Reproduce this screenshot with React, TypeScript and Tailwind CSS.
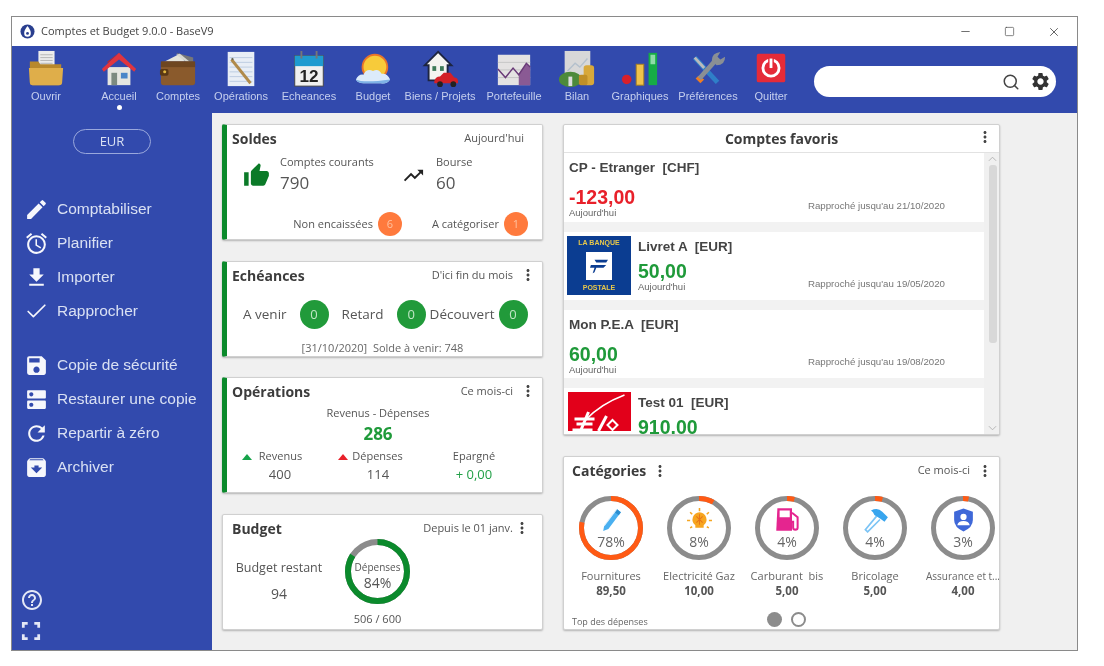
import type { ComponentType, ReactNode } from 'react';
import { Check, Minus, Search, Square, X } from 'lucide-react';
import {
    MdAccessAlarm,
    MdArchive,
    MdDns,
    MdEdit,
    MdFileDownload,
    MdHelpOutline,
    MdMoreVert,
    MdRefresh,
    MdSave,
    MdSettings,
    MdThumbUp,
    MdTrendingUp,
} from 'react-icons/md';

function Svg({ children, w = 40 }: { children: ReactNode; w?: number }) {
    return (
        <svg viewBox="0 0 40 40" width={w} height={w}>
            {children}
        </svg>
    );
}

const toolbar = [
    {
        label: 'Ouvrir', width: 'w-[68px]', icon: (
            <Svg>
                <rect x="12" y="1" width="17" height="20" fill="#ececec" />
                <path d="M14 5h13M14 8h13M14 11h13M14 14h13" stroke="#b4b4b4" />
                <path d="M3 12h9l2 3h22v19a3 3 0 0 1-3 3H6a3 3 0 0 1-3-3z" fill="#b8882c" />
                <path d="M2 19h36l-1 15a3 3 0 0 1-3 3H6a3 3 0 0 1-3-3z" fill="#dfae4a" />
            </Svg>
        ),
    },
    {
        label: 'Accueil', width: 'w-[78px]', active: true, icon: (
            <Svg>
                <rect x="8" y="18" width="24" height="19" fill="#e6e6e0" />
                <rect x="12" y="24" width="6" height="13" fill="#7d8a80" />
                <rect x="22" y="24" width="7" height="6" fill="#4a86c8" />
                <path d="M20 3L38 20l-2 3L20 10 4 23l-2-3z" fill="#e0353f" />
                <path d="M20 3L8 14v-2z" fill="#c22" />
            </Svg>
        ),
    },
    {
        label: 'Comptes', width: 'w-[40px]', icon: (
            <Svg>
                <path d="M6 12l16-8 5 8z" fill="#e4e4dc" />
                <path d="M18 3l10 9h8V8z" fill="#777" />
                <path d="M22 4l10 8h-4L18 5z" fill="#d8d8d0" />
                <rect x="2" y="12" width="36" height="25" rx="3" fill="#8a5a2c" />
                <rect x="2" y="12" width="36" height="6" fill="#6e4620" />
                <rect x="1" y="20" width="9" height="7" rx="2" fill="#5a3814" />
                <circle cx="6" cy="23" r="1.6" fill="#e2b840" />
            </Svg>
        ),
    },
    {
        label: 'Opérations', width: 'w-[86px]', icon: (
            <Svg>
                <rect x="6" y="2" width="28" height="36" fill="#e8eef6" />
                <path d="M8 8h24M8 13h24M8 18h24M8 23h24M8 28h24M8 33h24" stroke="#bccbe0" />
                <path d="M10 10l20 25" stroke="#b08a4a" strokeWidth="3" />
                <path d="M10 10l2-1" stroke="#665" strokeWidth="2" />
            </Svg>
        ),
    },
    {
        label: 'Echeances', width: 'w-[50px]', icon: (
            <Svg>
                <rect x="5" y="6" width="30" height="32" fill="#f0f0f0" stroke="#444" />
                <rect x="5" y="6" width="30" height="11" fill="#1f9bd0" />
                <path d="M12 1v8M28 1v8" stroke="#777" strokeWidth="2" />
                <text x="20" y="34" fontSize="18" fontWeight="700" textAnchor="middle" fontFamily="Liberation Sans" fill="#222">12</text>
            </Svg>
        ),
    },
    {
        label: 'Budget', width: 'w-[78px]', icon: (
            <Svg>
                <circle cx="22" cy="18" r="14" fill="#e8742a" />
                <circle cx="22" cy="18" r="12" fill="#f7cb3a" />
                <path d="M2 31q3-6 8-5 3-7 10-4 6-3 9 3 6-1 9 6-3 5-10 4H10q-6 0-8-4z" fill="#dcebfa" />
                <path d="M2 31q8 4 36 0-3 5-10 4H10q-6 0-8-4z" fill="#7eb2e6" />
            </Svg>
        ),
    },
    {
        label: 'Biens / Projets', width: 'w-[56px]', icon: (
            <Svg>
                <path d="M18 2L4 16h4v16h20V16h4z" fill="#f4f4f0" stroke="#1d2540" strokeWidth="2" />
                <rect x="12" y="17" width="4" height="5" fill="#3d7a58" />
                <rect x="20" y="17" width="4" height="5" fill="#3d7a58" />
                <path d="M14 33q1-5 6-5l4-4h7l4 5q4 0 4 4v2H14z" fill="#d32027" />
                <circle cx="20" cy="36" r="3" fill="#222" />
                <circle cx="34" cy="36" r="3" fill="#222" />
            </Svg>
        ),
    },
    {
        label: 'Portefeuille', width: 'w-[92px]', icon: (
            <Svg>
                <rect x="3" y="5" width="34" height="32" fill="#e4e2e2" />
                <path d="M3 13h34M3 21h34M3 29h34" stroke="#c4c4c4" />
                <path d="M3 20l8 9 8-10 6 7 8-12 4 4v19H25V26l-6-7-8 10z" fill="#8a5a94" />
                <path d="M3 20l8 9 8-10 6 7 8-12 4 4" fill="none" stroke="#6a3a78" strokeWidth="1.5" />
            </Svg>
        ),
    },
    {
        label: 'Bilan', width: 'w-[34px]', icon: (
            <Svg>
                <rect x="7" y="1" width="27" height="27" fill="#d8d8d8" />
                <path d="M10 22l8-8 5 4 8-9" stroke="#b4c0cc" fill="none" strokeWidth="1.5" />
                <ellipse cx="13" cy="31" rx="12" ry="8" fill="#4d8a3a" />
                <rect x="11" y="28" width="4" height="10" fill="#ddd" />
                <rect x="27" y="16" width="11" height="21" rx="3" fill="#d8a83a" />
                <rect x="22" y="26" width="9" height="11" rx="2" fill="#c08f28" />
            </Svg>
        ),
    },
    {
        label: 'Graphiques', width: 'w-[92px]', icon: (
            <Svg>
                <circle cx="6" cy="31" r="5" fill="#d8202a" />
                <rect x="16" y="15" width="8" height="22" fill="#f0c24a" stroke="#a8801e" />
                <rect x="29" y="3" width="9" height="34" fill="#16ac46" />
                <rect x="31" y="5" width="5" height="10" fill="#8edba8" />
            </Svg>
        ),
    },
    {
        label: 'Préférences', width: 'w-[44px]', icon: (
            <Svg>
                <path d="M6 8l24 26" stroke="#2f7fc8" strokeWidth="5" />
                <path d="M6 8l10 11" stroke="#bbb" strokeWidth="3" />
                <path d="M10 27l-3 3 5 5 4-4z" fill="#ee7d22" />
                <path d="M11 30L27 12" stroke="#8a8f94" strokeWidth="5" />
                <path d="M24 11q0-8 9-9l-3 5 3 3 5-3q0 9-9 9z" fill="#8a8f94" />
            </Svg>
        ),
    },
    {
        label: 'Quitter', width: 'w-[82px]', icon: (
            <Svg>
                <rect x="5" y="4" width="30" height="30" rx="2" fill="#e52b38" />
                <circle cx="20" cy="19" r="8.5" fill="none" stroke="#fff" strokeWidth="3" />
                <path d="M20 8v11" stroke="#e52b38" strokeWidth="6" />
                <path d="M20 9v10" stroke="#fff" strokeWidth="3" />
            </Svg>
        ),
    },
];

type SideIcon = ComponentType<{ size?: number; className?: string }>;

const ThinCheck: SideIcon = (props) => <Check {...props} strokeWidth={1.6} />;

const actionsTop: { label: string; icon: SideIcon }[] = [
    { label: 'Comptabiliser', icon: MdEdit },
    { label: 'Planifier', icon: MdAccessAlarm },
    { label: 'Importer', icon: MdFileDownload },
    { label: 'Rapprocher', icon: ThinCheck },
];

const actionsBottom: { label: string; icon: SideIcon }[] = [
    { label: 'Copie de sécurité', icon: MdSave },
    { label: 'Restaurer une copie', icon: MdDns },
    { label: 'Repartir à zéro', icon: MdRefresh },
    { label: 'Archiver', icon: MdArchive },
];

function SideAction({ label, icon: Icon }: { label: string; icon: SideIcon }) {
    return (
        <div className="flex h-[34px] items-center pl-[12px]">
            <Icon size={25} className="shrink-0 text-[#f6f7fc]" />
            <span className="ml-[8px] text-[15.5px] whitespace-nowrap text-[#d9e0f3]">{label}</span>
        </div>
    );
}

function Dots({ className }: { className?: string }) {
    return <MdMoreVert size={18} className={`shrink-0 text-[#444] ${className ?? ''}`} />;
}

function Card({ className, accent, children }: { className: string; accent?: boolean; children: ReactNode }) {
    return (
        <div
            className={`rounded-[2px] border border-[#d0d0d0] bg-white shadow-[0_1px_2px_rgba(0,0,0,0.25)] ${accent ? 'border-l-[5px] border-l-[#0b8a2c] pl-[5px]' : 'pl-[9px]'} ${className}`}
        >
            {children}
        </div>
    );
}

function CardHead({ title, right, dots = true, tight }: { title: string; right: string; dots?: boolean; tight?: boolean }) {
    return (
        <div className={`flex h-[28px] items-center pb-[2px] ${tight ? 'pr-[11px]' : 'pr-[5px]'}`}>
            <span className="text-[14px] font-bold text-[#3c3c3c]">{title}</span>
            <span className={`ml-auto text-[11px] text-[#555] ${dots ? '' : 'mr-[13px]'}`}>{right}</span>
            {dots && <Dots className={tight ? '' : 'ml-[6px]'} />}
        </div>
    );
}

function Ring({ pct, color, size, stroke, children }: { pct: number; color: string; size: number; stroke: number; children: ReactNode }) {
    const r = (size - stroke) / 2;
    const c = 2 * Math.PI * r;
    return (
        <div className="relative shrink-0" style={{ width: size, height: size }}>
            <svg width={size} height={size} className="-rotate-90">
                <circle cx={size / 2} cy={size / 2} r={r} fill="none" stroke="#8c8c8c" strokeWidth={stroke} />
                <circle cx={size / 2} cy={size / 2} r={r} fill="none" stroke={color} strokeWidth={stroke} strokeDasharray={`${(c * pct) / 100} ${c}`} />
            </svg>
            <div className="absolute inset-0 flex flex-col items-center">{children}</div>
        </div>
    );
}

function CountBadge({ value, color, size }: { value: string; color: string; size: string }) {
    return (
        <span className={`flex shrink-0 items-center justify-center rounded-full ${size} ${color}`}>{value}</span>
    );
}

function Triangle({ color, className }: { color: string; className: string }) {
    return (
        <svg viewBox="0 0 10 6" width="10" height="6" className={`inline-block ${className}`}>
            <path d="M5 0l5 6H0z" fill={color} />
        </svg>
    );
}

function Soldes() {
    return (
        <Card accent className="h-[116px]">
            <CardHead title="Soldes" right="Aujourd'hui" dots={false} />
            <div className="mt-[1px] flex h-[42px] items-center">
                <MdThumbUp size={27} className="ml-[11px] text-[#0b7a28]" />
                <div className="ml-[10px] w-[122px] text-[#555]">
                    <div className="text-[11px] leading-[16px]">Comptes courants</div>
                    <div className="text-[17px] leading-[26px]">790</div>
                </div>
                <MdTrendingUp size={23} className="text-[#222]" />
                <div className="ml-[11px] text-[#555]">
                    <div className="text-[11px] leading-[16px]">Bourse</div>
                    <div className="text-[17px] leading-[26px]">60</div>
                </div>
            </div>
            <div className="mt-[15px] flex h-[26px] items-center justify-end pr-[14px] text-[11px] text-[#555]">
                <span>Non encaissées</span>
                <CountBadge value="6" size="ml-[5px] h-[24px] w-[24px] text-[11px] text-[#ffc2a0]" color="bg-[#ff7a3d]" />
                <span className="ml-[30px]">A catégoriser</span>
                <CountBadge value="1" size="ml-[5px] h-[24px] w-[24px] text-[11px] text-[#ffc2a0]" color="bg-[#ff7a3d]" />
            </div>
        </Card>
    );
}

function Echeances() {
    const badge = 'h-[29px] w-[29px] text-[13px] text-[#bfe6c4]';
    return (
        <Card accent className="mt-[21px] h-[96px]">
            <CardHead title="Echéances" right="D'ici fin du mois" />
            <div className="mt-[10px] flex h-[29px] items-center pl-[11px] text-[13.5px] text-[#555]">
                <span>A venir</span>
                <CountBadge value="0" size={`ml-[13px] ${badge}`} color="bg-[#219a3a]" />
                <span className="ml-[13px]">Retard</span>
                <CountBadge value="0" size={`ml-[13px] ${badge}`} color="bg-[#219a3a]" />
                <span className="ml-[4px]">Découvert</span>
                <CountBadge value="0" size={`ml-[4px] ${badge}`} color="bg-[#219a3a]" />
            </div>
            <div className="mt-[11px] pr-[9px] text-center text-[11px] whitespace-pre text-[#666]">[31/10/2020]  Solde à venir: 748</div>
        </Card>
    );
}

function Operations() {
    return (
        <Card accent className="mt-[20px] h-[116px]">
            <CardHead title="Opérations" right="Ce mois-ci" />
            <div className="pr-[18px] text-center text-[11px] leading-[14px] text-[#555]">Revenus - Dépenses</div>
            <div className="pr-[18px] text-center text-[17px] leading-[28px] font-bold text-[#1f9a3a]">286</div>
            <div className="grid grid-cols-[96px_100px_92px] text-center text-[#555]">
                <div className="pr-[16px] text-[11px] leading-[16px]"><Triangle color="#16a34a" className="mr-[7px]" />Revenus</div>
                <div className="pr-[15px] text-[11px] leading-[16px]"><Triangle color="#e8202a" className="mr-[4px]" />Dépenses</div>
                <div className="text-[11px] leading-[16px]">Epargné</div>
                <div className="text-[13px] leading-[20px]">400</div>
                <div className="text-[13px] leading-[20px]">114</div>
                <div className="text-[13px] leading-[20px] text-[#22a047]">+ 0,00</div>
            </div>
        </Card>
    );
}

function Budget() {
    return (
        <Card className="mt-[21px] h-[116px]">
            <CardHead title="Budget" right="Depuis le 01 janv." tight />
            <div className="flex text-[#555]">
                <div className="mt-[16px] w-[94px] text-center">
                    <div className="text-[12.5px] leading-[18px] whitespace-nowrap">Budget restant</div>
                    <div className="mt-[7px] text-[14px] leading-[20px]">94</div>
                </div>
                <div className="mt-[-4px] ml-[19px] flex flex-col items-center">
                    <Ring pct={84} color="#0b8a2c" size={65} stroke={6}>
                        <span className="mt-[21px] text-[10px] leading-[14px]">Dépenses</span>
                        <span className="text-[14px] leading-[18px]">84%</span>
                    </Ring>
                    <span className="mt-[8px] text-[11px] leading-[14px]">506 / 600</span>
                </div>
            </div>
        </Card>
    );
}

function AccountRow({ name, amount, color, date, logo, hint = true, className }: { name: string; amount: string; color: string; date: string; logo?: ReactNode; hint?: boolean; className: string }) {
    return (
        <div className={`flex shrink-0 bg-white font-['Liberation_Sans',sans-serif] ${className}`}>
            {logo}
            <div className={`relative flex-1 ${logo ? 'pl-[7px]' : 'pl-[5px]'}`}>
                <div className="mt-[6px] text-[13.5px] leading-[18px] font-bold whitespace-pre text-[#444]">{name}</div>
                <div className={`${logo ? 'mt-[4px]' : 'mt-[9px]'} text-[19.5px] leading-[22px] font-bold ${color}`}>{amount}</div>
                {hint && <div className="text-[9.5px] leading-[9px] text-[#666]">Aujourd'hui</div>}
                {date && (
                    <div className="absolute right-[39px] bottom-[8px] text-[9.7px] text-[#777]">Rapproché jusqu'au {date}</div>
                )}
            </div>
        </div>
    );
}

function PostaleLogo() {
    return (
        <div className="mt-[4px] ml-[3px] flex h-[59px] w-[64px] shrink-0 flex-col items-center justify-between bg-[#0b3d91] py-[2px] text-[7px] leading-[10px] font-bold text-[#e8c84a]">
            <span>LA BANQUE</span>
            <div className="flex h-[28px] w-[26px] items-center justify-center bg-white">
                <svg viewBox="0 0 24 20" width="22" height="18">
                    <path d="M7 3h15l-2 3H9zM3 9h17l-3 3H9l-2 5 -2 1 2-6H2z" fill="#0b3d91" />
                </svg>
            </div>
            <span>POSTALE</span>
        </div>
    );
}

function EpargneLogo() {
    return (
        <div className="mt-[4px] ml-[4px] h-[39px] w-[63px] shrink-0 overflow-hidden bg-[#e2001a]">
            <svg viewBox="0 0 62 39" width="63" height="39">
                <path d="M17 28Q32 12 56 3" fill="none" stroke="#fff" strokeWidth="1.5" />
                <path d="M6 27h20M8 32h16M4 38h20" stroke="#fff" strokeWidth="3" />
                <path d="M20 20l-8 19" stroke="#fff" strokeWidth="3" />
                <path d="M38 24l-8 15" stroke="#fff" strokeWidth="3" />
                <path d="M44 28l5 5-5 5-5-5z" fill="none" stroke="#fff" strokeWidth="2" />
            </svg>
        </div>
    );
}

function Favoris() {
    return (
        <Card className="relative flex h-[311px] flex-col !pl-0">
            <div className="relative flex h-[28px] shrink-0 items-center justify-center border-b border-[#e2e2e2]">
                <span className="text-[14px] font-bold text-[#3c3c3c]">Comptes favoris</span>
                <div className="absolute top-[3px] right-[5px]"><Dots /></div>
            </div>
            <div className="flex min-h-0 flex-1">
                <div className="flex flex-1 flex-col gap-[10px] overflow-hidden bg-[#f2f2f2]">
                    <AccountRow className="h-[69px]" name="CP - Etranger  [CHF]" amount="-123,00" color="text-[#e8202a]" date="21/10/2020" />
                    <AccountRow className="h-[68px]" name="Livret A  [EUR]" amount="50,00" color="text-[#1f9a3a]" date="19/05/2020" logo={<PostaleLogo />} />
                    <AccountRow className="h-[68px]" name="Mon P.E.A  [EUR]" amount="60,00" color="text-[#1f9a3a]" date="19/08/2020" />
                    <AccountRow className="h-[68px]" name="Test 01  [EUR]" amount="910,00" color="text-[#1f9a3a]" date="" logo={<EpargneLogo />} hint={false} />
                </div>
                <div className="flex w-[15px] shrink-0 flex-col items-center bg-[#f0f0f0] pl-[2px]">
                    <svg viewBox="0 0 10 6" width="9" height="6" className="mt-[3px]"><path d="M1 5l4-4 4 4" fill="none" stroke="#b0b0b0" /></svg>
                    <div className="mt-[3px] h-[178px] w-[8px] rounded-[3px] bg-[#d8d8d8]" />
                    <svg viewBox="0 0 10 6" width="9" height="6" className="mt-auto mb-[3px]"><path d="M1 1l4 4 4-4" fill="none" stroke="#b0b0b0" /></svg>
                </div>
            </div>
        </Card>
    );
}

const categories = [
    {
        pct: 78, name: 'Fournitures', value: '89,50', label: 'text-[11px]', icon: (
            <svg viewBox="0 0 24 24" width="25" height="27">
                <path d="M17 2l4 3-12 16-5 2 1-5z" fill="#4ab0f0" />
                <path d="M17 2l4 3-2 3-4-3z" fill="#2a8ed0" />
                <path d="M5 18l12-16" stroke="#e8f4fd" strokeWidth="1" />
            </svg>
        ),
    },
    {
        pct: 8, name: 'Electricité Gaz', value: '10,00', label: 'text-[11px]', icon: (
            <svg viewBox="0 0 24 24" width="25" height="25">
                <path d="M12 1v3M3 5l2 2M21 5l-2 2M0 13h3M21 13h3M3 20l2-1M21 20l-2-1" stroke="#f5a623" strokeWidth="1.5" />
                <path d="M12 5a7 7 0 0 0-4 12.500V20h8v-2.500A7 7 0 0 0 12 5z" fill="#f7a51f" />
                <path d="M9 9l6 6M15 9l-6 6M12 7v10" stroke="#e8741a" strokeWidth="1" />
            </svg>
        ),
    },
    {
        pct: 4, name: 'Carburant  bis', value: '5,00', label: 'text-[11px]', icon: (
            <svg viewBox="0 0 24 24" width="27" height="27">
                <path d="M3 2h13v20H2z" fill="#e5258f" />
                <rect x="5" y="4" width="9" height="6" fill="#fff" />
                <path d="M16 6l5 4v9a2 2 0 0 1-4 0v-5h-1" fill="none" stroke="#e5258f" strokeWidth="1.8" />
            </svg>
        ),
    },
    {
        pct: 4, name: 'Bricolage', value: '5,00', label: 'text-[11px]', icon: (
            <svg viewBox="0 0 24 24" width="27" height="27">
                <path d="M13 9L3 21l2 2 11-11" fill="#fff" stroke="#7cc4f5" strokeWidth="1.5" />
                <path d="M8 4q6-3 10 1l5 5-3 4-4-3-5-3q-1-3-3-4z" fill="#38a5ee" />
            </svg>
        ),
    },
    {
        pct: 3, name: 'Assurance et t...', value: '4,00', label: 'text-[10px]', icon: (
            <svg viewBox="0 0 24 24" width="25" height="26">
                <path d="M12 1l9 3v8q0 7-9 11-9-4-9-11V4z" fill="#3f68d8" />
                <circle cx="12" cy="9" r="3" fill="#fff" />
                <path d="M6 17q1-4 6-4t6 4z" fill="#fff" />
            </svg>
        ),
    },
];

function Categories() {
    return (
        <Card className="relative mt-[21px] h-[174px] overflow-hidden !pl-0">
            <div className="flex h-[29px] items-center pr-[5px] pb-[2px] pl-[8px]">
                <span className="text-[14px] font-bold text-[#3c3c3c]">Catégories</span>
                <Dots className="ml-[5px]" />
                <span className="ml-auto text-[11px] text-[#555]">Ce mois-ci</span>
                <Dots className="ml-[6px]" />
            </div>
            <div className="mt-[10px] flex pl-[3px]">
                {categories.map((c) => (
                    <div key={c.name} className="flex w-[88px] shrink-0 flex-col items-center">
                        <Ring pct={c.pct} color="#ff5a14" size={64} stroke={5}>
                            <div className="mt-[10px] flex h-[27px] items-center justify-center">{c.icon}</div>
                            <span className="text-[14px] leading-[18px] text-[#666]">{c.pct}%</span>
                        </Ring>
                        <div className={`mt-[8px] text-center leading-[16px] whitespace-pre text-[#666] ${c.label}`}>{c.name}</div>
                        <div className="text-[11.5px] leading-[14px] font-bold text-[#555]">{c.value}</div>
                    </div>
                ))}
            </div>
            <div className="mt-[12px] flex h-[18px] items-center pl-[8px]">
                <span className="w-[195px] pt-[6px] text-[9px] text-[#666]">Top des dépenses</span>
                <span className="h-[15px] w-[15px] rounded-full bg-[#8c8c8c]" />
                <span className="ml-[9px] h-[15px] w-[15px] rounded-full border-2 border-[#8c8c8c] bg-white" />
            </div>
        </Card>
    );
}

export default function App() {
    return (
        <div className="h-[666px] w-[1104px] overflow-hidden bg-white pt-[16px] pl-[11px] font-['Open_Sans',sans-serif]">
            <div className="flex h-[635px] w-[1067px] flex-col border border-[#8a8a8a] blur-[0.4px]">
                <div className="flex h-[29px] shrink-0 items-center bg-white pl-[8px] text-[#444]">
                    <svg viewBox="0 0 16 16" width="15" height="15">
                        <circle cx="8" cy="8" r="7.500" fill="#2a3f8f" />
                        <path d="M8 2q4 5 3.500 8A3.500 3.500 0 0 1 4.500 10Q4 7 8 2z" fill="#fff" />
                        <circle cx="8" cy="10" r="1.500" fill="#2a3f8f" />
                    </svg>
                    <span className="ml-[6px] text-[11px]">Comptes et Budget 9.0.0 - BaseV9</span>
                    <Minus size={13} strokeWidth={1.4} className="ml-auto" />
                    <Square size={11} strokeWidth={1.4} className="ml-[32px]" />
                    <X size={14} strokeWidth={1.4} className="mr-[16px] ml-[32px]" />
                </div>
                <div className="flex h-[67px] shrink-0 items-start bg-[#324aad] font-['Liberation_Sans',sans-serif]">
                    {toolbar.map((item) => (
                        <div key={item.label} className={`flex shrink-0 flex-col items-center pt-[4px] ${item.width}`}>
                            <div className="flex h-[38px] w-[38px] items-center justify-center">{item.icon}</div>
                            <span className="mt-[1px] text-[11px] leading-[14px] whitespace-nowrap text-[#c5cfee]">{item.label}</span>
                            {item.active && <span className="mt-[2px] h-[5px] w-[5px] rounded-full bg-white" />}
                        </div>
                    ))}
                    <div className="mt-[20px] ml-[2px] flex h-[31px] w-[242px] shrink-0 items-center justify-end rounded-full bg-white pr-[5px] text-[#333]">
                        <Search size={18} strokeWidth={2} className="text-[#444]" />
                        <MdSettings size={21} className="ml-[10px]" />
                    </div>
                </div>
                <div className="flex min-h-0 flex-1">
                    <aside className="flex w-[200px] shrink-0 flex-col bg-[#324aad] pt-[16px] font-['Liberation_Sans',sans-serif]">
                        <div className="ml-[61px] flex h-[25px] w-[78px] items-center justify-center rounded-full border border-[#9aa8dc] font-['Open_Sans',sans-serif] text-[13px] text-[#d9e0f3]">EUR</div>
                        <div className="mt-[38px]">
                            {actionsTop.map((a) => <SideAction key={a.label} {...a} />)}
                        </div>
                        <div className="mt-[20px]">
                            {actionsBottom.map((a) => <SideAction key={a.label} {...a} />)}
                        </div>
                        <div className="mt-auto mb-[8px] ml-[8px] flex flex-col gap-[8px] text-[#e4e8f6]">
                            <MdHelpOutline size={24} />
                            <svg viewBox="0 0 20 20" width="22" height="22" fill="none" stroke="currentColor" strokeWidth="2.500">
                                <path d="M3 7V3h4M13 3h4v4M3 13v4h4M17 13v4h-4" />
                            </svg>
                        </div>
                    </aside>
                    <main className="flex min-w-0 flex-1 bg-[#f0f0f0] pt-[11px] pl-[10px]">
                        <div className="w-[321px] shrink-0">
                            <Soldes />
                            <Echeances />
                            <Operations />
                            <Budget />
                        </div>
                        <div className="ml-[20px] w-[437px] shrink-0">
                            <Favoris />
                            <Categories />
                        </div>
                    </main>
                </div>
            </div>
        </div>
    );
}
